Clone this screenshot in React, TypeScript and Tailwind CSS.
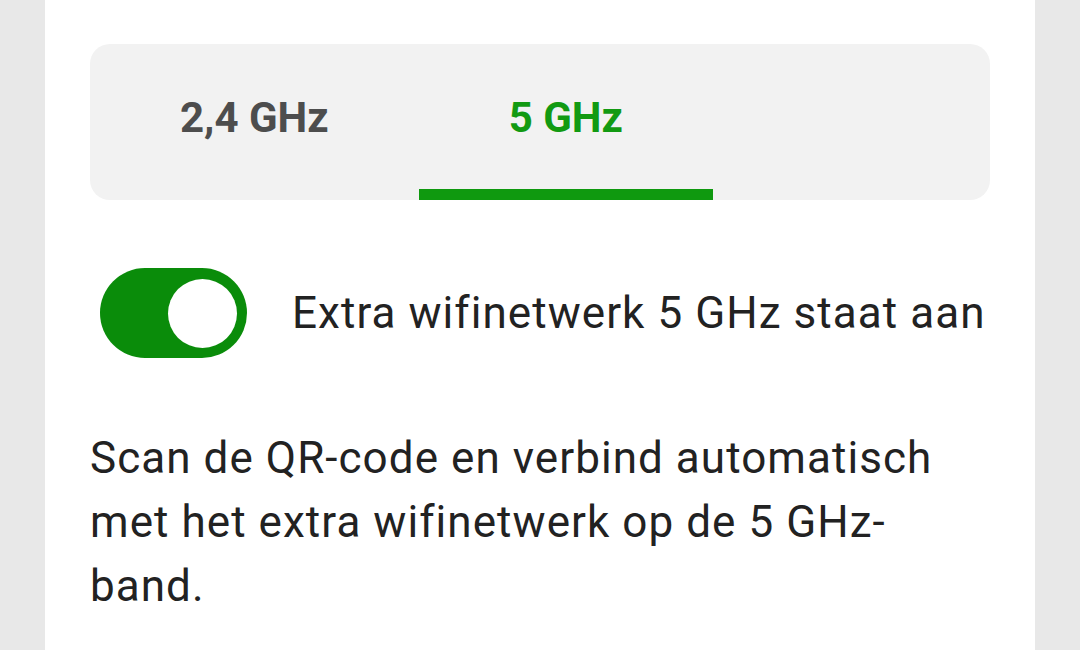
import { useState } from "react";

const tabs = ["2,4 GHz", "5 GHz"];

function Toggle({ on, onChange }: { on: boolean; onChange: () => void }) {
  return (
    <button
      type="button"
      role="switch"
      aria-checked={on}
      onClick={onChange}
      className={`relative ml-[10px] flex h-[90px] w-[147px] shrink-0 items-center rounded-full px-[10px] ${
        on ? "justify-end bg-[#0a8c0a]" : "justify-start bg-[#9e9e9e]"
      }`}
    >
      <span className="block h-[69px] w-[69px] rounded-full bg-white" />
    </button>
  );
}

export default function App() {
  const [active, setActive] = useState(1);
  const [enabled, setEnabled] = useState(true);

  return (
    <div
      className="flex h-[650px] w-full justify-center overflow-hidden bg-[#e8e8e8]"
      style={{ fontFamily: "Roboto, 'Noto Sans', sans-serif" }}
    >
      <div className="w-[990px] bg-white px-[45px] pt-[44px]">
        <div className="flex h-[156px] rounded-[20px] bg-[#f2f2f2]">
          {tabs.map((tab, i) => (
            <button
              key={tab}
              type="button"
              onClick={() => setActive(i)}
              className={`flex flex-col text-[42px] font-bold ${
                active === i ? "text-[#129a12]" : "text-[#4d4d4d]"
              }`}
            >
              <span className="flex flex-1 items-center px-[90px] pt-[2px]">{tab}</span>
              <span
                className={`block h-[11px] w-full ${active === i ? "bg-[#0f990f]" : "bg-transparent"}`}
              />
            </button>
          ))}
        </div>

        <div className="mt-[68px] flex items-center gap-[45px]">
          <Toggle on={enabled} onChange={() => setEnabled(!enabled)} />
          <span className="whitespace-nowrap text-[44px] tracking-[0.024em] text-[#222222]">
            Extra wifinetwerk 5 GHz {enabled ? "staat aan" : "staat uit"}
          </span>
        </div>

        <p className="mt-[68px] text-[44px] leading-[64px] tracking-[0.024em] text-[#222222]">
          Scan de QR-code en verbind automatisch met het extra wifinetwerk op de 5 GHz-band.
        </p>
      </div>
    </div>
  );
}
